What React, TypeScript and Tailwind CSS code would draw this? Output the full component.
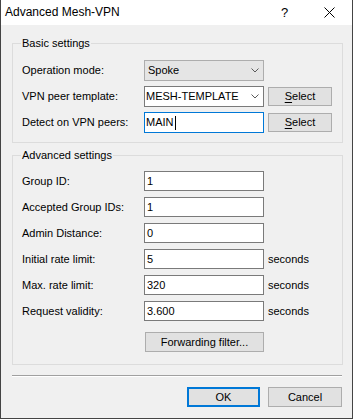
import React from "react";

const font = "font-['Liberation_Sans',Arial,sans-serif]";

interface fieldProps {
  label: string;
  value: string;
  unit?: string;
}

const advanced: fieldProps[] = [
  { label: "Group ID:", value: "1" },
  { label: "Accepted Group IDs:", value: "1" },
  { label: "Admin Distance:", value: "0" },
  { label: "Initial rate limit:", value: "5", unit: "seconds" },
  { label: "Max. rate limit:", value: "320", unit: "seconds" },
  { label: "Request validity:", value: "3.600", unit: "seconds" },
];

function Chevron() {
  return (
    <svg width="8" height="5" viewBox="0 0 8 5" className="shrink-0">
      <path d="M0.5 0.5 L4 4 L7.5 0.5" fill="none" stroke="#5a5a5a" strokeWidth="1" />
    </svg>
  );
}

function SelectButton() {
  return (
    <button className="ml-[4px] flex h-[19px] w-[64px] items-center justify-center border border-[#adadad] bg-[#e1e1e1] text-black">
      <span className="underline underline-offset-2">S</span>elect
    </button>
  );
}

function Group({ title, children, className }: { title: string; children: React.ReactNode; className?: string }) {
  return (
    <div className={"relative border border-[#dcdcdc] " + (className ?? "")}>
      {/* caption sits over the top border */}
      <span className="absolute left-[8px] top-[-7px] bg-[#f0f0f0] px-[1px] leading-[13px]">{title}</span>
      {children}
    </div>
  );
}

export default function App() {
  return (
    <div className={`${font} h-[419px] w-[353px] overflow-hidden border-x border-b border-[#444444] bg-[#f0f0f0] text-[11px] leading-[13px] text-black`}>
      {/* title bar */}
      <div className="flex h-[25px] items-center bg-white">
        <span className="pl-[4px] text-[12px] flex-1">Advanced Mesh-VPN</span>
        <div className="flex h-full w-[45px] items-center justify-center text-[13px]">?</div>
        <div className="flex h-full w-[45px] items-center justify-center">
          <svg width="11" height="11" viewBox="0 0 11 11">
            <path d="M0.5 0.5 L10.5 10.5 M10.5 0.5 L0.5 10.5" stroke="#000" strokeWidth="1" />
          </svg>
        </div>
      </div>

      <div className="flex flex-col pl-[11px] pr-[9px] pt-[18px]">
        {/* BASIC SETTINGS */}
        <Group title="Basic settings" className="pb-[9px] pt-[16px]">
          <div className="flex flex-col gap-[5px]">
            <div className="flex h-[21px] items-center">
              <span className="w-[131px] pl-[9px]">Operation mode:</span>
              <div className="flex h-[21px] w-[120px] items-center justify-between border border-[#adadad] bg-[#e5e5e5] pl-[3px] pr-[4px]">
                <span>Spoke</span>
                <Chevron />
              </div>
            </div>
            <div className="flex h-[21px] items-center">
              <span className="w-[131px] pl-[9px]">VPN peer template:</span>
              <div className="flex h-[21px] w-[120px] items-center justify-between border border-[#7a7a7a] bg-white pl-[1px] pr-[4px]">
                <span>MESH-TEMPLATE</span>
                <Chevron />
              </div>
              <SelectButton />
            </div>
            <div className="flex h-[21px] items-center">
              <span className="w-[131px] pl-[9px]">Detect on VPN peers:</span>
              <div className="flex h-[21px] w-[120px] items-center border border-[#0078d7] bg-white pl-[1px]">
                <span>MAIN</span>
                <span className="ml-[1px] h-[14px] w-px bg-black" />
              </div>
              <SelectButton />
            </div>
          </div>
        </Group>

        {/* ADVANCED SETTINGS */}
        <Group title="Advanced settings" className="mt-[12px] pb-[12px] pt-[15px]">
          <div className="flex flex-col gap-[6px]">
            {advanced.map((f, i) => (
              <div key={i} className="flex h-[20px] items-center">
                <span className="w-[131px] pl-[9px]">{f.label}</span>
                <div className="flex h-[20px] w-[120px] items-center border border-[#7a7a7a] bg-white pl-[2px]">
                  {f.value}
                </div>
                {f.unit && <span className="ml-[4px]">{f.unit}</span>}
              </div>
            ))}
          </div>
          <div className="mt-[11px] pl-[132px]">
            <button className="flex h-[20px] w-[119px] items-center justify-center border border-[#adadad] bg-[#e1e1e1]">
              Forwarding filter...
            </button>
          </div>
        </Group>

        <div className="mr-[1px] mt-[10px] h-[2px] border-t border-[#a0a0a0] bg-white" />

        <div className="mr-[1px] mt-[10px] flex justify-end gap-[8px]">
          <button className="flex h-[20px] w-[73px] items-center justify-center border-2 border-[#0078d7] bg-[#e1e1e1]">
            OK
          </button>
          <button className="flex h-[20px] w-[74px] items-center justify-center border border-[#adadad] bg-[#e1e1e1]">
            Cancel
          </button>
        </div>
      </div>
    </div>
  );
}
